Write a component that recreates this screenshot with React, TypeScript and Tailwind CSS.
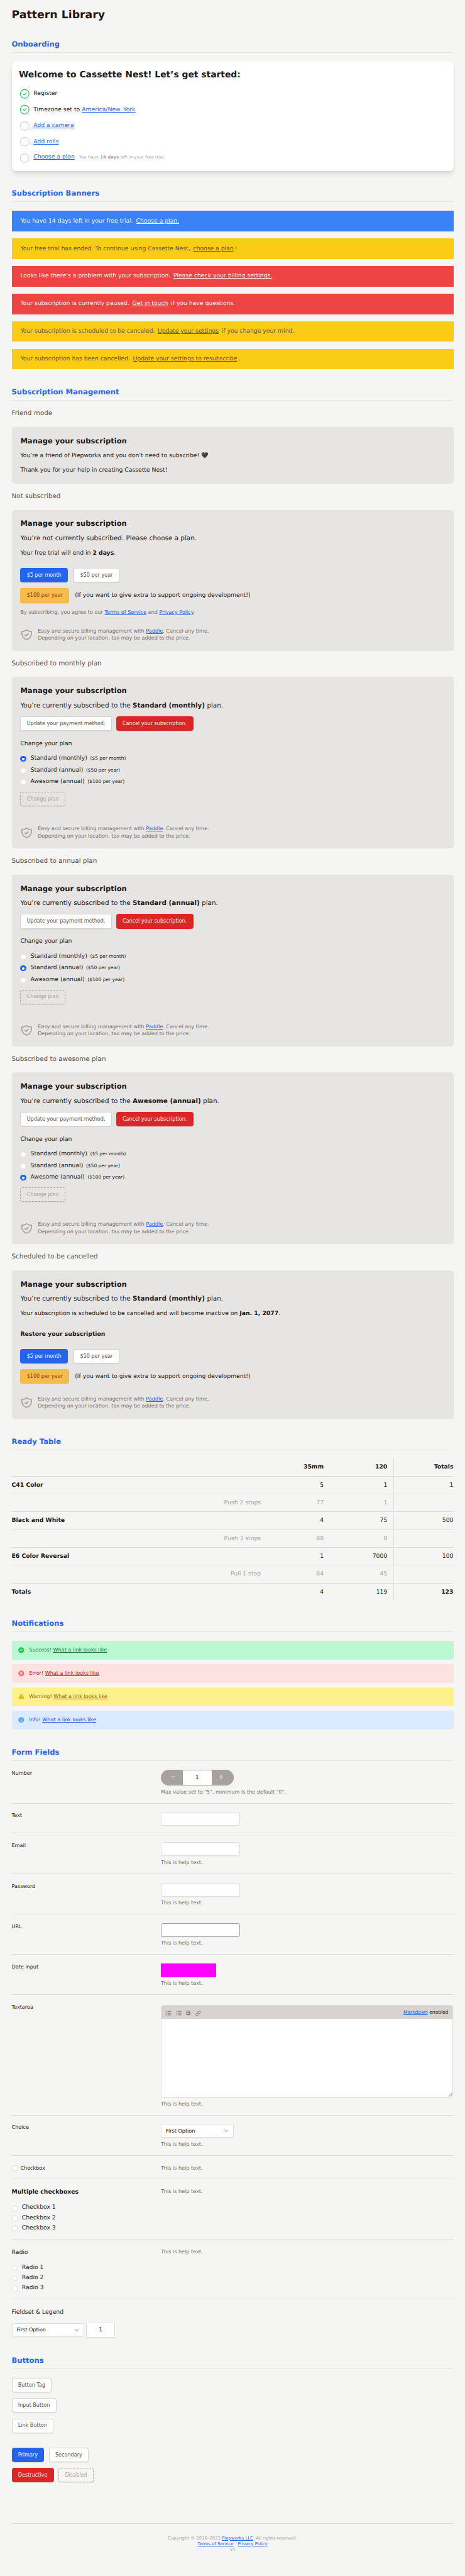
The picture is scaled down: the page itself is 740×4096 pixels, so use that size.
import React from "react";
import { Bold, Link as LinkIcon } from "lucide-react";

type Kids = { children?: React.ReactNode };

function H2({ children }: Kids) {
  return (
    <h2 className="mt-12 h-[38px] border-b-2 border-[#e5e7eb] text-[20px] leading-7 font-bold text-[#2563eb]">
      {children}
    </h2>
  );
}

function H3({ children }: Kids) {
  return <h3 className="mt-6 mb-6 h-6 text-[18px] leading-6 text-[#57534e]">{children}</h3>;
}

function A({ children }: Kids) {
  return <a className="text-[#2563eb] underline">{children}</a>;
}

const tones = {
  primary: "border-[#2563eb] bg-[#2563eb] text-[#eff6ff]",
  secondary: "border-[#d6d3d1] bg-white text-[#57534e]",
  orange: "border-[#f4bb4d] bg-[#f4bb4d] text-[#92400e]",
  danger: "border-[#dc2626] bg-[#dc2626] text-[#fef2f2]",
  disabled: "border-dashed border-[#a8a29e] text-[#a8a29e]",
};

function Button({ tone, children }: Kids & { tone: keyof typeof tones }) {
  return (
    <button
      className={
        "flex h-10 items-center rounded-md border-2 px-4 text-[14px] leading-5 whitespace-nowrap shadow-[0_1px_2px_rgba(0,0,0,0.08)] " +
        tones[tone]
      }
    >
      {children}
    </button>
  );
}

function StepIcon({ done }: { done?: boolean }) {
  return (
    <svg
      viewBox="0 0 24 24"
      fill="none"
      strokeWidth="1.5"
      strokeLinecap="round"
      strokeLinejoin="round"
      className={done ? "h-8 w-8 text-[#22c55e]" : "h-8 w-8 text-[#d6d3d1]"}
      stroke="currentColor"
    >
      <circle cx="12" cy="12" r="9" />
      {done && <path d="M9 12l2 2 4-4" />}
    </svg>
  );
}

function Step({ done, children }: Kids & { done?: boolean }) {
  return (
    <li className="flex h-8 items-center gap-2 text-[16px] leading-6">
      <StepIcon done={done} />
      <div className="flex items-baseline">{children}</div>
    </li>
  );
}

const bannerTones = {
  blue: "bg-[#3b82f6] text-[#eff6ff]",
  yellow: "bg-[#facc15] text-[#57534e]",
  red: "bg-[#ef4444] text-[#fef2f2]",
};

function Banner({
  tone,
  before,
  link,
  after,
}: {
  tone: keyof typeof bannerTones;
  before: string;
  link: string;
  after?: string;
}) {
  return (
    <div className={"h-14 px-6 py-4 text-[16px] leading-6 whitespace-pre " + bannerTones[tone]}>
      {before} <a className="mx-[3px] underline">{link}</a>
      {after}
    </div>
  );
}

function Panel({ children }: Kids) {
  return (
    <section className="rounded-lg bg-[#e7e5e4] p-6 text-[16px] leading-6">
      <h4 className="text-[20px] leading-7 font-bold">Manage your subscription</h4>
      {children}
    </section>
  );
}

function Paddle() {
  return (
    <div className="flex h-10 items-center gap-3 text-[14px] leading-5 text-[#78716c]">
      <svg
        viewBox="0 0 24 24"
        fill="none"
        stroke="#a8a29e"
        strokeWidth="2"
        strokeLinecap="round"
        strokeLinejoin="round"
        className="h-9 w-9"
      >
        <path d="M9 12l2 2 4-4m5.618-4.016A11.955 11.955 0 0112 2.944a11.955 11.955 0 01-8.618 3.04A12.02 12.02 0 003 9c0 5.591 3.824 10.29 9 11.622 5.176-1.332 9-6.03 9-11.622 0-1.042-.133-2.052-.382-3.016z" />
      </svg>
      <p>
        Easy and secure billing management with <A>Paddle</A>. Cancel any time.
        <br />
        Depending on your location, tax may be added to the price.
      </p>
    </div>
  );
}

function PriceButtons() {
  return (
    <>
      <div className="mt-7 flex gap-4">
        <Button tone="primary">$5 per month</Button>
        <Button tone="secondary">$50 per year</Button>
      </div>
      <div className="mt-4 flex items-center gap-4">
        <Button tone="orange">$100 per year</Button>
        <span>(If you want to give extra to support ongoing development!)</span>
      </div>
    </>
  );
}

function Radio({ checked }: { checked?: boolean }) {
  return checked ? (
    <span className="mt-[3px] flex h-4 w-4 items-center justify-center rounded-full bg-[#2563eb]">
      <span className="h-1.5 w-1.5 rounded-full bg-white" />
    </span>
  ) : (
    <span className="mt-[3px] h-4 w-4 rounded-full border border-[#e3e1df] bg-white" />
  );
}

function Checkbox() {
  return <span className="h-4 w-4 rounded border border-[#e0dedc] bg-white" />;
}

const plans: [string, string][] = [
  ["Standard (monthly)", "($5 per month)"],
  ["Standard (annual)", "($50 per year)"],
  ["Awesome (annual)", "($100 per year)"],
];

function PlanPanel({ current }: { current: number }) {
  return (
    <Panel>
      <p className="mt-4 text-[18px]">
        You’re currently subscribed to the <b>{plans[current][0]}</b> plan.
      </p>
      <div className="mt-4 flex gap-3">
        <Button tone="secondary">Update your payment method.</Button>
        <Button tone="danger">Cancel your subscription.</Button>
      </div>
      <p className="mt-6">Change your plan</p>
      <ul className="mt-4 flex flex-col gap-2">
        {plans.map(([name, price], i) => (
          <li key={name} className="flex h-6 items-center gap-3">
            <Radio checked={i === current} />
            <span>
              {name}
              <small className="ml-2 text-[13px]">{price}</small>
            </span>
          </li>
        ))}
      </ul>
      <div className="mt-4 mb-[52px] flex">
        <Button tone="disabled">Change plan</Button>
      </div>
      <Paddle />
    </Panel>
  );
}

const rows: { cells: [string, string, string, string]; kind: "head" | "main" | "sub" | "total" }[] = [
  { kind: "head", cells: ["", "35mm", "120", "Totals"] },
  { kind: "main", cells: ["C41 Color", "5", "1", "1"] },
  { kind: "sub", cells: ["Push 2 stops", "77", "1", ""] },
  { kind: "main", cells: ["Black and White", "4", "75", "500"] },
  { kind: "sub", cells: ["Push 3 stops", "88", "8", ""] },
  { kind: "main", cells: ["E6 Color Reversal", "1", "7000", "100"] },
  { kind: "sub", cells: ["Pull 1 stop", "84", "45", ""] },
  { kind: "total", cells: ["Totals", "4", "119", "123"] },
];

function ReadyTable() {
  return (
    <div className="mt-6 text-[16px] leading-6">
      {rows.map(({ kind, cells }, i) => (
        <div
          key={i}
          className={
            "grid grid-cols-[702px_173px_175px_166px] text-right " +
            (kind === "total" ? "h-12 " : "h-[49px] border-b border-[#e0dedc] ") +
            (kind === "head" ? "font-bold " : "") +
            (kind === "sub" ? "text-[#a8a29e]" : "")
          }
        >
          <div className={kind === "sub" ? "py-3 pr-4" : "py-3 text-left font-bold"}>{cells[0]}</div>
          <div className="py-3 pr-4">{cells[1]}</div>
          <div className="py-3 pr-4">{cells[2]}</div>
          <div className={"border-l border-[#e0dedc] py-3 " + (kind === "total" ? "font-bold" : "")}>{cells[3]}</div>
        </div>
      ))}
    </div>
  );
}

const notices = [
  {
    label: "Success!",
    box: "bg-[#bbf7d0] text-[#15803d]",
    icon: "text-[#22c55e]",
    d: "M10 18a8 8 0 100-16 8 8 0 000 16zm3.707-9.293a1 1 0 00-1.414-1.414L9 10.586 7.707 9.293a1 1 0 00-1.414 1.414l2 2a1 1 0 001.414 0l4-4z",
  },
  {
    label: "Error!",
    box: "bg-[#fee2e2] text-[#b91c1c]",
    icon: "text-[#f87171]",
    d: "M10 18a8 8 0 100-16 8 8 0 000 16zM8.707 7.293a1 1 0 00-1.414 1.414L8.586 10l-1.293 1.293a1 1 0 101.414 1.414L10 11.414l1.293 1.293a1 1 0 001.414-1.414L11.414 10l1.293-1.293a1 1 0 00-1.414-1.414L10 8.586 8.707 7.293z",
  },
  {
    label: "Warning!",
    box: "bg-[#fef08a] text-[#a16207]",
    icon: "text-[#eab308]",
    d: "M8.257 3.099c.765-1.36 2.722-1.36 3.486 0l5.58 9.92c.75 1.334-.213 2.98-1.742 2.98H4.42c-1.53 0-2.493-1.646-1.743-2.98l5.58-9.92zM11 13a1 1 0 11-2 0 1 1 0 012 0zm-1-8a1 1 0 00-1 1v3a1 1 0 002 0V6a1 1 0 00-1-1z",
  },
  {
    label: "Info!",
    box: "bg-[#dbeafe] text-[#1d4ed8]",
    icon: "text-[#60a5fa]",
    d: "M18 10a8 8 0 11-16 0 8 8 0 0116 0zm-7-4a1 1 0 11-2 0 1 1 0 012 0zM9 9a1 1 0 000 2v3a1 1 0 001 1h1a1 1 0 100-2v-3a1 1 0 00-1-1H9z",
  },
];

function Help({ children = "This is help text." }: Kids) {
  return <p className="text-[14px] leading-5 text-[#78716c]">{children}</p>;
}

function Field({ size, label, children }: Kids & { size: string; label: React.ReactNode }) {
  return (
    <div
      className={
        "grid grid-cols-[394.67px_805.33px] content-start gap-4 border-b border-[#e0dedc] pt-6 text-[14px] leading-5 " + size
      }
    >
      <div>{label}</div>
      <div className="flex flex-col items-start gap-2">{children}</div>
    </div>
  );
}

function Input({ dark }: { dark?: boolean }) {
  return (
    <div
      className={
        "h-[38px] w-[218px] rounded-md border bg-white shadow-[0_1px_2px_rgba(0,0,0,0.05)] " +
        (dark ? "border-[#989ca5]" : "border-[#e0dedc]")
      }
    />
  );
}

function Select() {
  return (
    <div className="flex h-[38px] w-[200px] items-center justify-between rounded-md border border-[#e0dedc] bg-white pr-2 pl-3 text-[14px] leading-5 shadow-[0_1px_2px_rgba(0,0,0,0.05)]">
      First Option
      <svg
        viewBox="0 0 20 20"
        fill="none"
        stroke="#6b7280"
        strokeWidth="1.5"
        strokeLinecap="round"
        strokeLinejoin="round"
        className="h-[21px] w-[21px]"
      >
        <path d="M6 8l4 4 4-4" />
      </svg>
    </div>
  );
}

function Options({ title, bold, names, radio }: { title: string; bold?: boolean; names: string[]; radio?: boolean }) {
  return (
    <div className="text-[16px] leading-6">
      <p className={bold ? "font-bold" : ""}>{title}</p>
      <ul className="mt-[18px] flex flex-col gap-1">
        {names.map((n) => (
          <li key={n} className="flex h-6 items-center gap-3">
            {radio ? <Radio /> : <span className="mt-[3px] flex"><Checkbox /></span>}
            {n}
          </li>
        ))}
      </ul>
    </div>
  );
}

function Textarea() {
  return (
    <div className="mt-1 flex h-[254px] w-[805px] flex-col rounded-md border border-[#e0dedc] bg-white shadow-[0_1px_2px_rgba(0,0,0,0.05)]">
      <div className="flex h-9 items-center justify-between rounded-t-[5px] bg-[#d6d3d1] pr-3 pl-[11px]">
        <div className="mt-1 flex items-center text-[#78716c]">
          <svg viewBox="0 0 16 14" className="h-[14px] w-4" fill="none" stroke="currentColor" strokeWidth="1.6">
            <path d="M6 2.2h10M6 7h10M6 11.8h10" />
            <path d="M.8 1.4h1.2V5.4M.6 5.2h2.8M.6 8.8h2.2v1.7L.9 12.4h2.4" strokeWidth="1" />
          </svg>
          <svg viewBox="0 0 16 14" className="ml-[13px] h-[14px] w-4" fill="none" stroke="currentColor" strokeWidth="1.6">
            <path d="M5 2.2h10M5 7h10M5 11.8h10M.5 2.2h2M.5 7h2M.5 11.8h2" />
          </svg>
          <Bold className="ml-[10px] h-4 w-4" strokeWidth={3.4} />
          <LinkIcon className="ml-[12px] h-[15px] w-[15px]" strokeWidth={2.4} />
        </div>
        <p className="text-[13px]">
          <A>Markdown</A> enabled
        </p>
      </div>
      <div className="flex flex-1 items-end justify-end">
        <svg viewBox="0 0 12 12" className="h-3 w-3" stroke="#78716c" strokeWidth="1">
          <path d="M1 11L11 1M4.5 11L11 4.5M8 11l3-3" />
        </svg>
      </div>
    </div>
  );
}

export default function App() {
  return (
    <div className="h-[7085px] w-[1280px] bg-[#f5f5f4] px-8 pt-6 font-['DejaVu_Sans',sans-serif] text-[#1c1917] [text-rendering:geometricPrecision] [zoom:0.578125]">
      <h1 className="text-[30px] leading-9 font-bold">Pattern Library</h1>

      <H2>Onboarding</H2>
      <section className="mt-6 h-[300px] rounded-xl bg-white p-5 shadow-[0_10px_15px_-3px_rgba(0,0,0,0.1),0_4px_6px_-2px_rgba(0,0,0,0.05)]">
        <h3 className="text-[24px] leading-8 font-bold">Welcome to Cassette Nest! Let’s get started:</h3>
        <ul className="mt-5 flex flex-col gap-3">
          <Step done>Register</Step>
          <Step done>
            <span>
              Timezone set to <A>America/New_York</A>
            </span>
          </Step>
          <Step>
            <A>Add a camera</A>
          </Step>
          <Step>
            <A>Add rolls</A>
          </Step>
          <Step>
            <A>Choose a plan</A>
            <span className="ml-3 text-[12px] text-[#a8a29e]">
              You have <b>14 days</b> left in your free trial.
            </span>
          </Step>
        </ul>
      </section>

      <H2>Subscription Banners</H2>
      <div className="mt-6 flex flex-col gap-5">
        <Banner tone="blue" before="You have 14 days left in your free trial." link="Choose a plan." />
        <Banner tone="yellow" before="Your free trial has ended. To continue using Cassette Nest," link="choose a plan" after="!" />
        <Banner tone="red" before="Looks like there’s a problem with your subscription." link="Please check your billing settings." />
        <Banner tone="red" before="Your subscription is currently paused." link="Get in touch" after=" if you have questions." />
        <Banner tone="yellow" before="Your subscription is scheduled to be canceled." link="Update your settings" after=" if you change your mind." />
        <Banner tone="yellow" before="Your subscription has been cancelled." link="Update your settings to resubscribe" after="." />
      </div>

      <H2>Subscription Management</H2>
      <H3>Friend mode</H3>
      <Panel>
        <p className="mt-4 h-6">You’re a friend of Piepworks and you don’t need to subscribe! 🖤</p>
        <p className="mt-4">Thank you for your help in creating Cassette Nest!</p>
      </Panel>

      <H3>Not subscribed</H3>
      <Panel>
        <p className="mt-4 text-[18px]">You’re not currently subscribed. Please choose a plan.</p>
        <p className="mt-4">
          Your free trial will end in <b>2 days</b>.
        </p>
        <PriceButtons />
        <p className="mt-4 mb-8 text-[14px] leading-5 text-[#78716c]">
          By subscribing, you agree to our <A>Terms of Service</A> and <A>Privacy Policy</A>.
        </p>
        <Paddle />
      </Panel>

      <H3>Subscribed to monthly plan</H3>
      <PlanPanel current={0} />
      <H3>Subscribed to annual plan</H3>
      <PlanPanel current={1} />
      <H3>Subscribed to awesome plan</H3>
      <PlanPanel current={2} />

      <H3>Scheduled to be cancelled</H3>
      <Panel>
        <p className="mt-4 text-[18px]">
          You’re currently subscribed to the <b>Standard (monthly)</b> plan.
        </p>
        <p className="mt-4">
          Your subscription is scheduled to be cancelled and will become inactive on <b>Jan. 1, 2077</b>.
        </p>
        <p className="mt-8 font-bold">Restore your subscription</p>
        <PriceButtons />
        <div className="mt-8">
          <Paddle />
        </div>
      </Panel>

      <H2>Ready Table</H2>
      <ReadyTable />

      <H2>Notifications</H2>
      <div className="mt-6 flex flex-col gap-3">
        {notices.map((n) => (
          <div key={n.label} className={"flex h-[52px] items-center gap-3 rounded-md px-4 text-[14px] leading-5 " + n.box}>
            <svg viewBox="0 0 20 20" fill="currentColor" className={"h-5 w-5 " + n.icon}>
              <path fillRule="evenodd" clipRule="evenodd" d={n.d} />
            </svg>
            <p>
              {n.label} <a className="underline">What a link looks like</a>
            </p>
          </div>
        ))}
      </div>

      <H2>Form Fields</H2>
      <Field size="h-[117px]" label="Number">
        <div className="flex h-11 w-[201px] items-center overflow-hidden rounded-full bg-[#a8a29e] text-[20px] text-white shadow-[0_1px_2px_rgba(0,0,0,0.08)]">
          <span className="w-[60px] pb-1 pl-2 text-center">−</span>
          <span className="flex h-10 w-20 items-center justify-center bg-white text-[16px] text-[#1c1917]">1</span>
          <span className="w-[60px] pr-2 pb-1 text-center">+</span>
        </div>
        <Help>Max value set to "5", minimum is the default "0".</Help>
      </Field>
      <Field size="h-[83px]" label="Text">
        <Input />
      </Field>
      <Field size="h-[111px]" label="Email">
        <Input />
        <Help />
      </Field>
      <Field size="h-[111px]" label="Password">
        <Input />
        <Help />
      </Field>
      <Field size="h-[111px]" label="URL">
        <Input dark />
        <Help />
      </Field>
      <Field size="h-[111px]" label="Date input">
        <div className="h-[38px] w-[153px] bg-[#ff00ff]" />
        <Help />
      </Field>
      <Field size="h-[331px]" label="Textarea">
        <Textarea />
        <Help />
      </Field>
      <Field size="h-[111px]" label="Choice">
        <Select />
        <Help />
      </Field>
      <Field
        size="h-[65px]"
        label={
          <span className="flex items-center gap-2">
            <Checkbox />
            Checkbox
          </span>
        }
      >
        <Help />
      </Field>
      <Field
        size="h-[165px]"
        label={<Options title="Multiple checkboxes" bold names={["Checkbox 1", "Checkbox 2", "Checkbox 3"]} />}
      >
        <Help />
      </Field>
      <Field size="h-[165px]" label={<Options title="Radio" radio names={["Radio 1", "Radio 2", "Radio 3"]} />}>
        <Help />
      </Field>
      <div className="h-[106px] pt-6 text-[16px] leading-6">
        <p>Fieldset &amp; Legend</p>
        <div className="mt-4 flex h-[42px] items-center gap-[5px]">
          <Select />
          <div className="flex h-[42px] w-20 items-center justify-center border border-[#e0dedc] bg-white shadow-[0_1px_2px_rgba(0,0,0,0.05)]">
            1
          </div>
        </div>
      </div>

      <H2>Buttons</H2>
      <div className="mt-6 flex flex-col items-start gap-4">
        <Button tone="secondary">Button Tag</Button>
        <Button tone="secondary">Input Button</Button>
        <Button tone="secondary">Link Button</Button>
      </div>
      <div className="mt-10 flex gap-[13px]">
        <Button tone="primary">Primary</Button>
        <Button tone="secondary">Secondary</Button>
      </div>
      <div className="mt-4 flex gap-[13px]">
        <Button tone="danger">Destructive</Button>
        <Button tone="disabled">Disabled</Button>
      </div>

      <footer className="mt-28 border-t border-[#e0dedc] pt-8 text-center text-[12px] leading-4 text-[#a8a29e]">
        <p>
          Copyright © 2016–2023 <A>Piepworks LLC</A>. All rights reserved.
        </p>
        <p className="flex justify-center gap-3">
          <A>Terms of Service</A>
          <A>Privacy Policy</A>
        </p>
        <p>v4</p>
      </footer>
    </div>
  );
}
